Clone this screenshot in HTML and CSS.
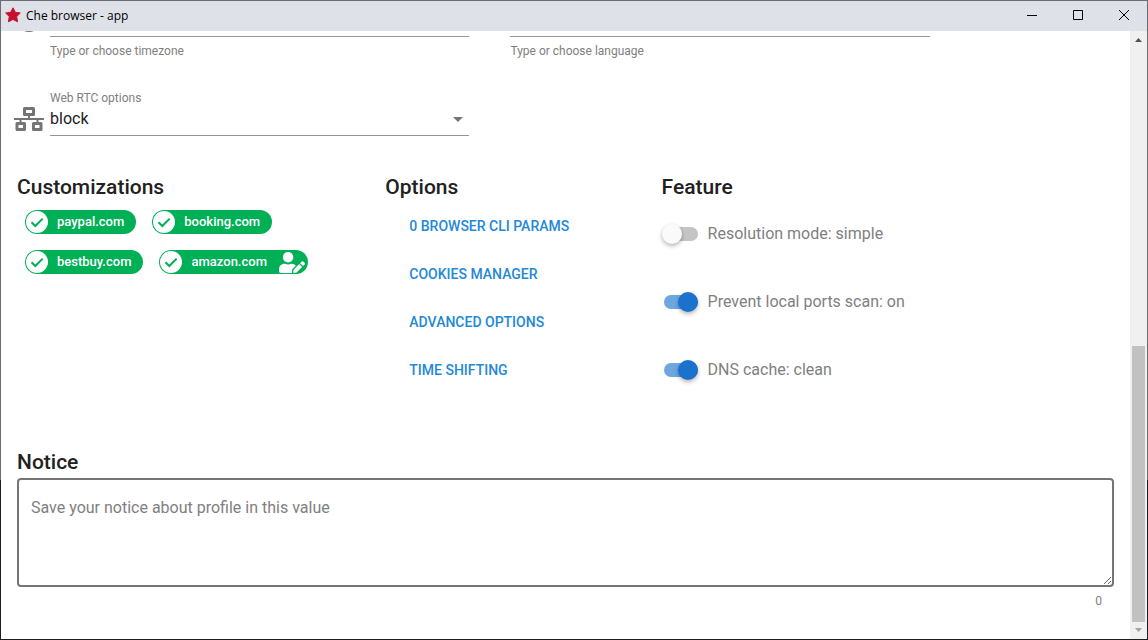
FILE: index.html
```
<!DOCTYPE html>
<html lang="en">
  <head>
    <meta charset="UTF-8">
    <title>Che browser - app</title>
    <link rel="stylesheet" href="styles.css">
  </head>
  <body>
    <svg class="defs" aria-hidden="true">
      <symbol id="icon-check" viewBox="0 0 22 22">
        <circle cx="11" cy="11" r="11" fill="#fff"/>
        <path d="M5.500 11.200l3.800 3.800 7.400-7.400" fill="none" stroke="#00b057" stroke-width="2"/>
      </symbol>
    </svg>

    <div class="window">
      <header class="titlebar">
        <svg class="logo" viewBox="0 0 16 16"><path d="M8 .8l2.300 4.500 5 .7-3.600 3.600.9 5.200L8 12.400l-4.600 2.400.9-5.200L.7 6l5-.7z" fill="#c8102e" stroke="#c8102e" stroke-linejoin="round"/></svg>
        <span class="app-name">Che browser - app</span>
        <button type="button" aria-label="Minimize"><svg viewBox="0 0 12 12"><path d="M1 6.500h10"/></svg></button>
        <button type="button" aria-label="Maximize"><svg viewBox="0 0 12 12"><path d="M1.500 1.500h9v9h-9z"/></svg></button>
        <button type="button" aria-label="Close"><svg viewBox="0 0 12 12"><path d="M1 1l10 10M11 1L1 11"/></svg></button>
      </header>

      <div class="content">
        <main>
          <div class="fields scrolled">
            <div class="field">
              <svg class="field-icon" viewBox="0 0 30 24"><circle cx="15" cy="12" r="11" fill="none" stroke="#757575" stroke-width="2"/></svg>
              <div class="field-body">
                <input type="text" id="timezone" aria-label="Timezone">
                <label class="hint" for="timezone">Type or choose timezone</label>
              </div>
            </div>
            <div class="field">
              <div class="field-body">
                <input type="text" id="language" aria-label="Language">
                <label class="hint" for="language">Type or choose language</label>
              </div>
            </div>
          </div>

          <div class="fields">
            <div class="field">
              <svg class="field-icon" viewBox="0 0 30 24" fill="none" stroke="#757575">
                <path d="M10.500 1.500h9v6h-9zM3 16.500h7.500v6H3zM19.500 16.500H27v6h-7.500z" stroke-width="3" stroke-linejoin="round"/>
                <path d="M0 12h30M15 8v4M6.500 12v4M23.500 12v4" stroke-width="2"/>
              </svg>
              <div class="field-body">
                <label for="webrtc">Web RTC options</label>
                <div class="select">
                  <select id="webrtc">
                    <option>block</option>
                  </select>
                  <svg class="arrow" viewBox="0 0 10 5"><path d="M0 0h10L5 5z" fill="#757575"/></svg>
                </div>
              </div>
            </div>
          </div>

          <div class="sections">
            <section>
              <h2>Customizations</h2>
              <div class="chips">
                <button type="button" class="chip"><svg class="check"><use href="#icon-check"/></svg><span>paypal.com</span></button>
                <button type="button" class="chip"><svg class="check"><use href="#icon-check"/></svg><span>booking.com</span></button>
                <button type="button" class="chip"><svg class="check"><use href="#icon-check"/></svg><span>bestbuy.com</span></button>
                <button type="button" class="chip chip-edit"><svg class="check"><use href="#icon-check"/></svg><span>amazon.com</span>
                  <svg class="user-edit" viewBox="0 0 640 512" fill="#fff"><path d="M224 256c70.700 0 128-57.300 128-128S294.700 0 224 0 96 57.300 96 128s57.300 128 128 128zm89.600 32h-16.700c-22.200 10.200-46.900 16-72.900 16s-50.600-5.800-72.900-16h-16.700C60.200 288 0 348.200 0 422.400V464c0 26.500 21.500 48 48 48h274.900c-2.400-6.800-3.400-14-2.600-21.300l6.800-60.900 1.200-11.100 7.900-7.900 77.300-77.300c-24.500-27.700-60-45.500-99.900-45.500zm45.300 145.300l-6.800 61c-1.100 10.200 7.500 18.800 17.600 17.600l60.900-6.800 137.900-137.900-71.700-71.700-137.900 137.800zM633 268.900L595.100 231c-9.300-9.300-24.500-9.300-33.800 0l-37.800 37.800-4.100 4.100 71.800 71.700 41.800-41.800c9.300-9.400 9.300-24.500 0-33.900z"/></svg>
                </button>
              </div>
            </section>

            <section>
              <h2>Options</h2>
              <div class="options">
                <button type="button">0 browser cli params</button>
                <button type="button">Cookies manager</button>
                <button type="button">Advanced options</button>
                <button type="button">Time shifting</button>
              </div>
            </section>

            <section>
              <h2>Feature</h2>
              <div class="features">
                <label><input type="checkbox"><span>Resolution mode: simple</span></label>
                <label><input type="checkbox" checked><span>Prevent local ports scan: on</span></label>
                <label><input type="checkbox" checked><span>DNS cache: clean</span></label>
              </div>
            </section>
          </div>

          <section class="notice">
            <h2><label for="notice">Notice</label></h2>
            <textarea id="notice" placeholder="Save your notice about profile in this value"></textarea>
            <div class="counter">0</div>
          </section>
        </main>

        <div class="scrollbar" aria-hidden="true">
          <svg viewBox="0 0 7 4"><path d="M0 4h7L3.500 0z" fill="#505050"/></svg>
          <div class="track"><div class="thumb"></div></div>
          <svg viewBox="0 0 7 4"><path d="M0 0h7L3.500 4z" fill="#a3a3a3"/></svg>
        </div>
      </div>
    </div>
  </body>
</html>
```
FILE: styles.css
```
* {
  box-sizing: border-box;
}

body {
  margin: 0;
  font-family: Roboto, "Liberation Sans", sans-serif;
  font-size: 16px;
  color: #212121;
}

button,
input,
select,
textarea {
  font: inherit;
  color: inherit;
}

button {
  border: 0;
  padding: 0;
  background: none;
}

svg {
  display: block;
  flex: none;
}

.defs {
  display: none;
}

/* window frame */
.window {
  display: flex;
  flex-direction: column;
  height: 100vh;
  padding: 1px;
  background: linear-gradient(#6b6b70 75%, #1c1c22 75%);
}

.titlebar {
  display: flex;
  align-items: center;
  flex: none;
  height: 30px;
  padding: 0 0 2px 4px;
  background: #dee1e8;
}

.logo {
  width: 16px;
  height: 16px;
}

.app-name {
  flex: 1;
  padding-left: 5px;
  font-family: "Open Sans", "Noto Sans", sans-serif;
  font-size: 12px;
  color: #000;
}

.titlebar button {
  display: grid;
  place-items: center;
  width: 46px;
  height: 28px;
}

.titlebar button svg {
  width: 12px;
  height: 12px;
  fill: none;
  stroke: #000;
}

.content {
  display: flex;
  flex: 1;
  min-height: 0;
  background: #fff;
}

main {
  flex: 1;
  padding: 0 16px 0 8px;
  overflow: hidden;
}

/* fields */
.fields {
  display: grid;
  grid-template-columns: 5fr 5fr 2fr;
}

.scrolled {
  margin-top: -26px;
  margin-bottom: 31px;
}

.field {
  display: grid;
  grid-template-columns: 30px 1fr;
  column-gap: 6px;
  padding-left: 5px;
}

.field-icon {
  align-self: center;
  width: 30px;
  height: 24px;
  margin-top: 12px;
}

.scrolled .field-icon {
  align-self: start;
  margin-top: 3px;
}

.field-body {
  grid-column: 2;
  display: flex;
  flex-direction: column;
}

.field-body label {
  font-size: 12px;
  line-height: 16px;
  color: #808080;
}

.field-body .hint {
  padding-top: 6px;
}

.field-body input {
  width: 100%;
  height: 32px;
  border: 0;
  border-bottom: 1px solid #949494;
  background: none;
}

.select {
  display: grid;
  align-items: center;
}

.select select {
  grid-area: 1 / 1;
  height: 30px;
  padding: 0 0 5px;
  border: 0;
  border-bottom: 1px solid #949494;
  border-radius: 0;
  background: none;
  appearance: none;
}

.arrow {
  grid-area: 1 / 1;
  justify-self: end;
  width: 10px;
  height: 5px;
  margin-right: 6px;
  margin-bottom: 3px;
  pointer-events: none;
}

/* sections */
.sections {
  display: grid;
  grid-template-columns: 4fr 3fr 5fr;
  margin-top: 35px;
}

.sections section,
.notice {
  padding-left: 8px;
}

h2 {
  margin: 0;
  font-size: 21px;
  font-weight: 500;
  line-height: 32px;
}

.chips {
  display: flex;
  flex-wrap: wrap;
  gap: 16px;
  padding: 7px 48px 0 8px;
}

.chip {
  display: flex;
  align-items: center;
  height: 24px;
  padding: 0 12px 0 1px;
  border-radius: 12px;
  background: #00b057;
  font-size: 13px;
  font-weight: 500;
  color: #fff;
}

.chip span,
.features span {
  padding-bottom: 2px;
}

.check {
  width: 22px;
  height: 22px;
  margin-right: 9px;
}

.chip-edit {
  padding-right: 3px;
}

.user-edit {
  width: 26px;
  height: 21px;
  margin-left: 12px;
}

.options {
  display: flex;
  flex-direction: column;
  align-items: flex-start;
  gap: 12px;
  padding: 5px 0 0 8px;
}

.options button {
  height: 36px;
  padding: 0 16px;
  font-size: 14px;
  font-weight: 500;
  text-transform: uppercase;
  color: #2488d8;
}

.features {
  display: flex;
  flex-direction: column;
  gap: 44px;
  padding-top: 19px;
}

.features label {
  display: flex;
  align-items: center;
  height: 24px;
  color: #808080;
}

.features input {
  display: grid;
  align-items: center;
  width: 36px;
  height: 20px;
  margin: 0 10px 0 0;
  appearance: none;
}

.features input::before,
.features input::after {
  content: "";
  grid-area: 1 / 1;
}

.features input::before {
  width: 34px;
  height: 14px;
  margin-left: 2px;
  border-radius: 7px;
  background: #c4c4c4;
}

.features input::after {
  width: 20px;
  height: 20px;
  border-radius: 50%;
  background: #fafafa;
  box-shadow: 0 2px 4px rgba(0, 0, 0, .3);
}

.features input:checked::before {
  background: #6ea7de;
}

.features input:checked::after {
  justify-self: end;
  background: #1b72cc;
}

/* notice */
.notice {
  margin-top: 58px;
}

.notice textarea {
  display: block;
  width: 100%;
  height: 109px;
  padding: 16px 12px;
  border: 2px solid #757575;
  border-radius: 4px;
  line-height: 24px;
}

.notice textarea::placeholder {
  color: #808080;
}

.counter {
  padding: 6px 12px 0 0;
  font-size: 12px;
  line-height: 16px;
  text-align: right;
  color: #808080;
}

/* scrollbar */
.scrollbar {
  display: flex;
  flex-direction: column;
  align-items: center;
  width: 17px;
  padding: 7px 0;
  background: #f0f0f0;
}

.scrollbar svg {
  width: 7px;
  height: 4px;
}

.track {
  display: flex;
  flex-direction: column;
  justify-content: flex-end;
  flex: 1;
  padding: 6px 0;
}

.thumb {
  width: 13px;
  height: 48%;
  background: #c1c1c1;
}
```
